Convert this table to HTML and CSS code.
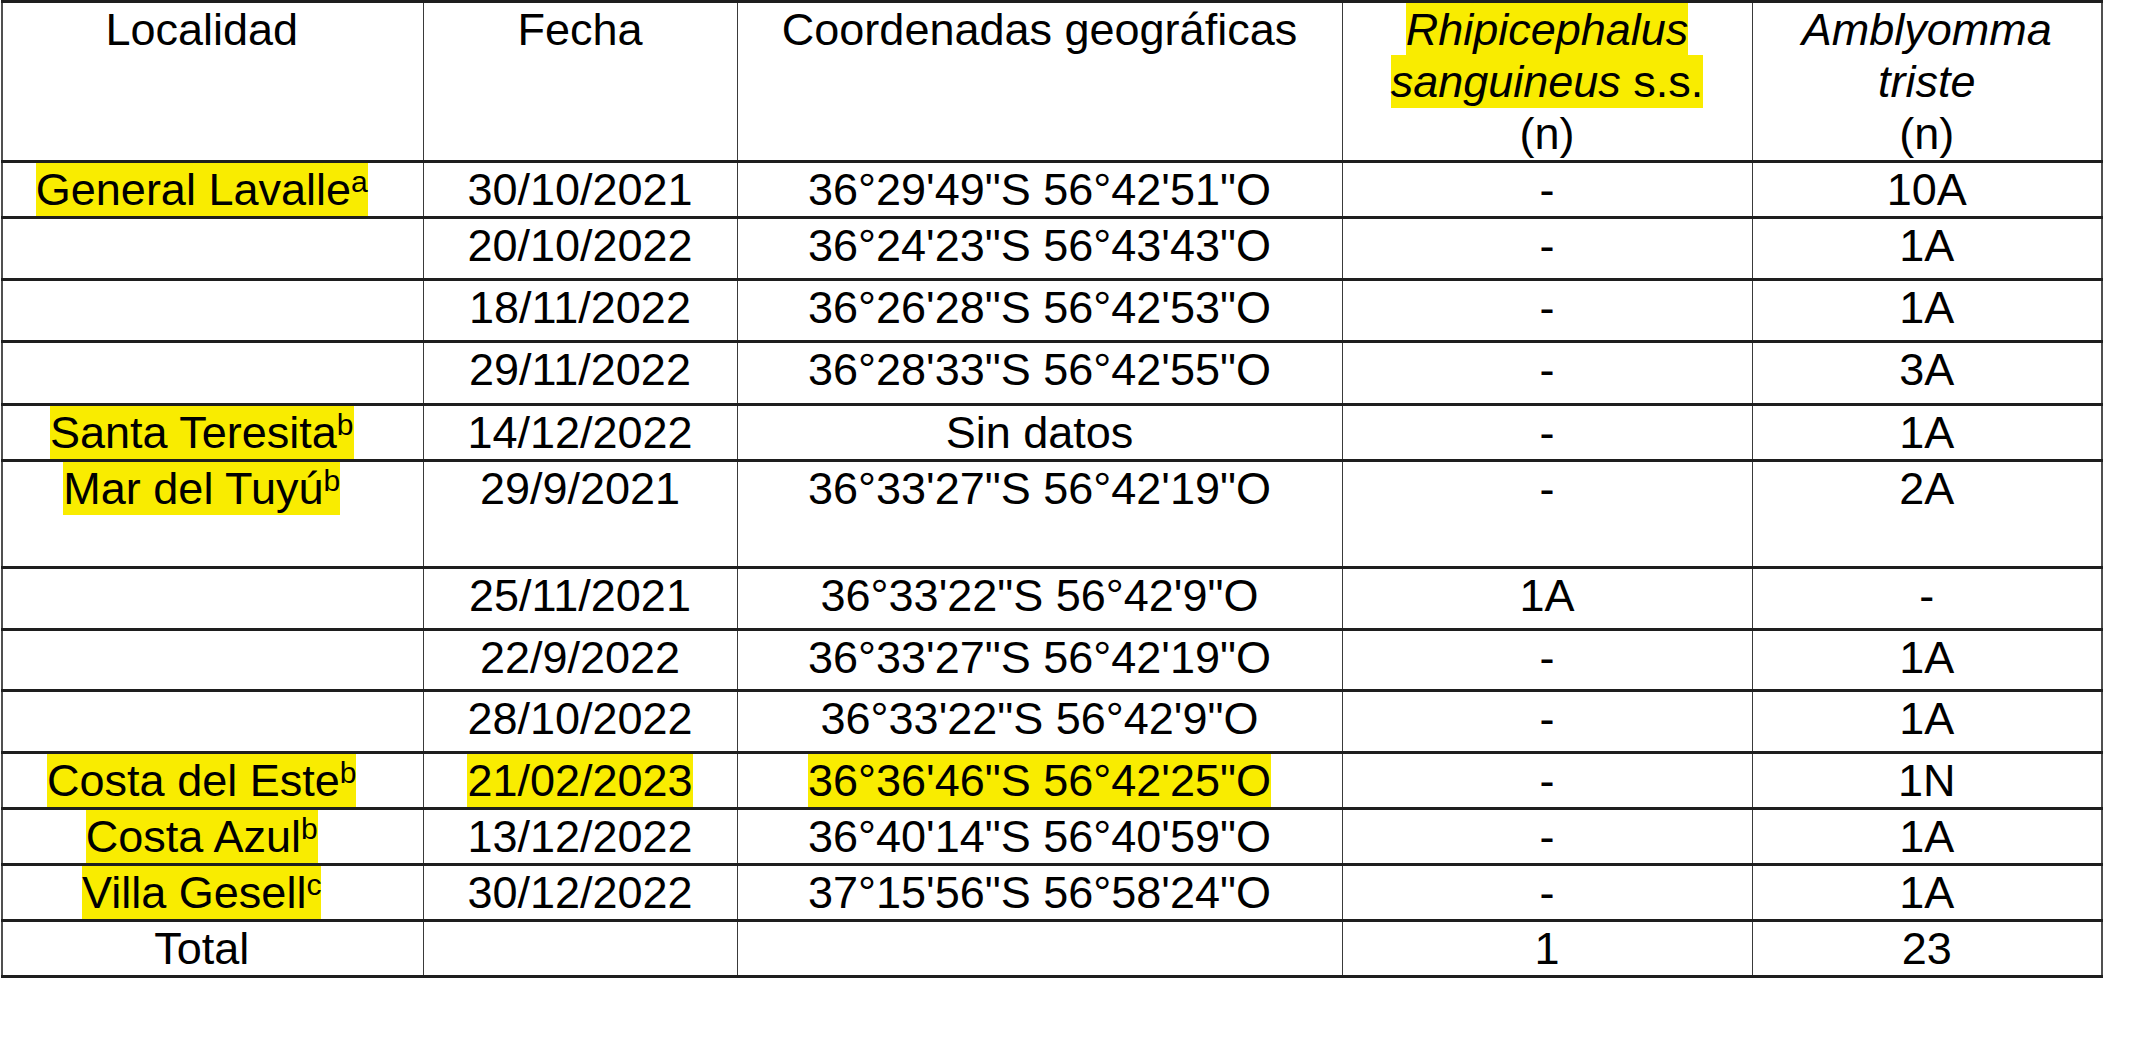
FILE: index.html
```html
<!DOCTYPE html>
<html lang="es">
<head>
<meta charset="utf-8">
<title>Tabla de garrapatas</title>
<link rel="stylesheet" href="styles.css">
</head>
<body>
<table class="ticks">
  <colgroup>
    <col class="c-loc">
    <col class="c-date">
    <col class="c-coord">
    <col class="c-rhip">
    <col class="c-amb">
  </colgroup>
  <thead>
    <tr class="h-head">
      <th class="loc">Localidad</th>
      <th>Fecha</th>
      <th>Coordenadas geográficas</th>
      <th><span class="hl"><i>Rhipicephalus</i></span><br><span class="hl"><i>sanguineus</i> s.s.</span><br>(n)</th>
      <th><i>Amblyomma</i><br><i>triste</i><br>(n)</th>
    </tr>
  </thead>
  <tbody>
    <tr class="h55">
      <td class="loc"><span class="hl">General Lavalle<sup>a</sup></span></td>
      <td>30/10/2021</td><td>36°29'49"S 56°42'51"O</td><td>-</td><td>10A</td>
    </tr>
    <tr class="h63">
      <td class="loc"></td>
      <td>20/10/2022</td><td>36°24'23"S 56°43'43"O</td><td>-</td><td>1A</td>
    </tr>
    <tr class="h63">
      <td class="loc"></td>
      <td>18/11/2022</td><td>36°26'28"S 56°42'53"O</td><td>-</td><td>1A</td>
    </tr>
    <tr class="h64">
      <td class="loc"></td>
      <td>29/11/2022</td><td>36°28'33"S 56°42'55"O</td><td>-</td><td>3A</td>
    </tr>
    <tr class="h55">
      <td class="loc"><span class="hl">Santa Teresita<sup>b</sup></span></td>
      <td>14/12/2022</td><td>Sin datos</td><td>-</td><td>1A</td>
    </tr>
    <tr class="h108">
      <td class="loc"><span class="hl">Mar del Tuyú<sup>b</sup></span></td>
      <td>29/9/2021</td><td>36°33'27"S 56°42'19"O</td><td>-</td><td>2A</td>
    </tr>
    <tr class="h63">
      <td class="loc"></td>
      <td>25/11/2021</td><td>36°33'22"S 56°42'9"O</td><td>1A</td><td>-</td>
    </tr>
    <tr class="h62">
      <td class="loc"></td>
      <td>22/9/2022</td><td>36°33'27"S 56°42'19"O</td><td>-</td><td>1A</td>
    </tr>
    <tr class="h63">
      <td class="loc"></td>
      <td>28/10/2022</td><td>36°33'22"S 56°42'9"O</td><td>-</td><td>1A</td>
    </tr>
    <tr class="h55">
      <td class="loc"><span class="hl">Costa del Este<sup>b</sup></span></td>
      <td><span class="hl">21/02/2023</span></td><td><span class="hl">36°36'46"S 56°42'25"O</span></td><td>-</td><td>1N</td>
    </tr>
    <tr class="h55">
      <td class="loc"><span class="hl">Costa Azul<sup>b</sup></span></td>
      <td>13/12/2022</td><td>36°40'14"S 56°40'59"O</td><td>-</td><td>1A</td>
    </tr>
    <tr class="h56">
      <td class="loc"><span class="hl">Villa Gesell<sup>c</sup></span></td>
      <td>30/12/2022</td><td>37°15'56"S 56°58'24"O</td><td>-</td><td>1A</td>
    </tr>
    <tr class="h55">
      <td class="loc">Total</td>
      <td></td><td></td><td>1</td><td>23</td>
    </tr>
  </tbody>
</table>
</body>
</html>
```

FILE: styles.css
```css
html, body {
  margin: 0;
  padding: 0;
  background: #ffffff;
}

body {
  font-family: "Liberation Sans", Arial, sans-serif;
  color: #000000;
}

.ticks {
  margin: 0 0 0 1px;
  border-collapse: collapse;
  table-layout: fixed;
  width: 2101px;
  font-size: 45px;
  line-height: 52px;
}

.c-loc { width: 421px; }
.c-date { width: 314px; }
.c-coord { width: 605px; }
.c-rhip { width: 410px; }
.c-amb { width: 350px; }

.ticks th,
.ticks td {
  font-weight: normal;
  text-align: center;
  vertical-align: top;
  padding: 1px 6px 0 6px;
  white-space: nowrap;
  border-left: 1.5px solid #3a3a3a;
  border-right: 1.5px solid #3a3a3a;
  border-top: 3px solid #1e1e1e;
  border-bottom: 3px solid #1e1e1e;
}

.ticks th.loc,
.ticks td.loc {
  padding-left: 4px;
  padding-right: 26px;
  border-left: 2px solid #505050;
}

.ticks tr > :last-child {
  border-right: 2px solid #505050;
}

.h-head { height: 158px; }
.h55 { height: 54px; }
.h56 { height: 55px; }
.h62 { height: 61px; }
.h63 { height: 62px; }
.h64 { height: 63px; }
.h108 { height: 107px; }

.hl {
  background: #f9ec00;
  padding: 1px 0;
}

.ticks sup {
  font-size: 30px;
  line-height: 0;
  vertical-align: 13px;
}
```
